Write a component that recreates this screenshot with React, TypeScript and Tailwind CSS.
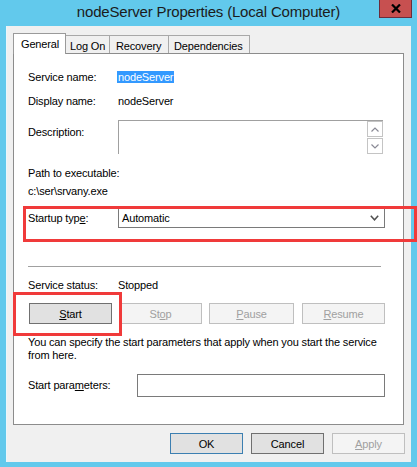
import React from "react";

const U = ({ children }: { children: React.ReactNode }) => (
  <span className="underline underline-offset-[1px] decoration-[1px]">{children}</span>
);

function Btn({
  children,
  w,
  disabled,
  variant,
}: {
  children: React.ReactNode;
  w: string;
  disabled?: boolean;
  variant?: "default" | "normal";
}) {
  const cls = disabled
    ? "bg-[#f4f4f4] border-[#bfbfbf] text-[#a0a0a0]"
    : variant === "default"
    ? "bg-[#e1e1e1] border-[#3c7fb1] text-black"
    : "bg-[#e1e1e1] border-[#707070] text-black";
  return (
    <div className={`${w} h-[21px] border flex items-center justify-center ${cls}`}>
      <span className="leading-[14px]">{children}</span>
    </div>
  );
}

export default function App() {
  return (
    <div className="relative w-[417px] h-[467px] overflow-hidden bg-[#62c9ec] font-['Liberation_Sans',Arial,sans-serif] text-[11px] tracking-[-0.15px] text-black">
      {/* Title bar */}
      <div className="relative h-[26px] flex justify-center">
        <span className="mt-[3px] text-[15px] leading-[18px] tracking-[-0.18px] text-[#1b1b1b]">
          nodeServer Properties (Local Computer)
        </span>
        <div className="absolute left-[379px] top-[-1px] w-[33px] h-[19px] bg-[#c75050] border border-[#6b2c3c] flex items-center justify-center">
          <svg width="10" height="9" viewBox="0 0 10 9">
            <path d="M1 0.5 L9 8.5 M9 0.5 L1 8.5" stroke="#000" strokeWidth="2.2" />
          </svg>
        </div>
      </div>

      {/* Client area */}
      <div className="ml-[6px] w-[405px] h-[436px] border-l border-[#eaf7fc] bg-[#f0f0f0] flex flex-col">
        {/* Tabs */}
        <div className="mt-[7px] ml-[6px] h-[21px] mb-[-1px] flex items-start relative z-10">
          <div className="w-[53px] h-[21px] bg-white border-l border-t border-r border-[#9a9a9a] flex items-start pl-[7px] pt-[3px]">
            <span className="leading-[14px]">General</span>
          </div>
          <div className="mt-[2px] w-[44px] h-[18px] bg-[#f0f0f0] border-t border-r border-[#a8a8a8] pl-[4px] pt-[2px]">
            <span className="leading-[14px]">Log On</span>
          </div>
          <div className="mt-[2px] w-[59px] h-[18px] bg-[#f0f0f0] border-t border-r border-[#a8a8a8] pl-[6px] pt-[2px]">
            <span className="leading-[14px]">Recovery</span>
          </div>
          <div className="mt-[2px] w-[81px] h-[18px] bg-[#f0f0f0] border-t border-r border-[#a8a8a8] pl-[5px] pt-[2px]">
            <span className="leading-[14px]">Dependencies</span>
          </div>
        </div>

        {/* Panel */}
        <div className="ml-[6px] w-[391px] h-[372px] border border-[#8c8c8c] bg-white flex flex-col pl-[14px]">
          {/* Service name */}
          <div className="mt-[15px] h-[16px] flex items-center">
            <span className="w-[90px]">Service name:</span>
            <span className="-ml-[1px] h-[12px] leading-[12px] bg-[#3399ff] text-white pl-[1px] pr-[1px]">nodeServer</span>
          </div>
          {/* Display name */}
          <div className="mt-[8px] h-[16px] flex items-center">
            <span className="w-[90px]">Display name:</span>
            <span>nodeServer</span>
          </div>
          {/* Description */}
          <div className="mt-[11px] h-[34px] flex items-start">
            <span className="w-[90px] pt-[4px] leading-[16px]">Description:</span>
            <div className="w-[265px] h-[34px] border-t border-l border-[#a0a0a0] flex justify-end">
              <div className="w-[16px] flex flex-col">
                <div className="h-[16px] border border-[#c4c4c4] flex items-center justify-center">
                  <svg width="8" height="5" viewBox="0 0 8 5">
                    <path d="M0.5 4.5 L4 1 L7.5 4.5" stroke="#8a8a95" strokeWidth="1.2" fill="none" />
                  </svg>
                </div>
                <div className="mt-[1px] h-[16px] border border-[#c4c4c4] flex items-center justify-center">
                  <svg width="8" height="5" viewBox="0 0 8 5">
                    <path d="M0.5 0.5 L4 4 L7.5 0.5" stroke="#8a8a95" strokeWidth="1.2" fill="none" />
                  </svg>
                </div>
              </div>
            </div>
          </div>
          {/* Path */}
          <div className="mt-[11px] h-[16px] flex items-center">
            <span>Path to executable:</span>
          </div>
          <div className="mt-[2px] h-[16px] flex items-center">
            <span>c:\ser\srvany.exe</span>
          </div>
          {/* Startup type */}
          <div className="mt-[9px] h-[20px] flex items-center">
            <span className="w-[90px]">
              Startup typ<U>e</U>:
            </span>
            <div className="w-[267px] h-[20px] border border-[#7a7a7a] bg-white flex items-center justify-between pl-[3px] pr-[5px]">
              <span>Automatic</span>
              <svg width="9" height="6" viewBox="0 0 9 6">
                <path d="M0.8 0.8 L4.5 4.8 L8.2 0.8" stroke="#505050" strokeWidth="1.5" fill="none" />
              </svg>
            </div>
          </div>
          {/* Separator */}
          <div className="mt-[38px] h-[1px] w-[353px] bg-[#a0a0a0]" />
          {/* Service status */}
          <div className="mt-[10px] h-[16px] flex items-center">
            <span className="w-[90px]">Service status:</span>
            <span>Stopped</span>
          </div>
          {/* Control buttons */}
          <div className="mt-[10px] ml-[1px] flex">
            <Btn w="w-[83px]">
              <U>S</U>tart
            </Btn>
            <div className="ml-[7px]">
              <Btn w="w-[83px]" disabled>
                St<U>o</U>p
              </Btn>
            </div>
            <div className="ml-[7px]">
              <Btn w="w-[85px]" disabled>
                <U>P</U>ause
              </Btn>
            </div>
            <div className="ml-[8px]">
              <Btn w="w-[83px]" disabled>
                <U>R</U>esume
              </Btn>
            </div>
          </div>
          {/* Note */}
          <p className="mt-[12px] leading-[13px]">
            You can specify the start parameters that apply when you start the service
            <br />
            from here.
          </p>
          {/* Start parameters */}
          <div className="mt-[12px] h-[23px] flex items-center">
            <span className="w-[109px]">
              Start para<U>m</U>eters:
            </span>
            <div className="w-[248px] h-[23px] border border-[#7a7a7a] bg-white" />
          </div>
        </div>

        {/* Footer */}
        <div className="mt-[8px] pr-[6px] flex justify-end gap-[8px]">
          <Btn w="w-[73px]" variant="default">
            OK
          </Btn>
          <Btn w="w-[73px]">Cancel</Btn>
          <Btn w="w-[73px]" disabled>
            <U>A</U>pply
          </Btn>
        </div>
      </div>

      {/* Red annotation boxes */}
      <div className="pointer-events-none absolute left-[23px] top-[206px] w-[394px] h-[36px] border-[3px] border-[#f03a3a]" />
      <div className="pointer-events-none absolute left-[13px] top-[292px] w-[109px] h-[44px] border-[3px] border-[#f03a3a]" />
    </div>
  );
}
